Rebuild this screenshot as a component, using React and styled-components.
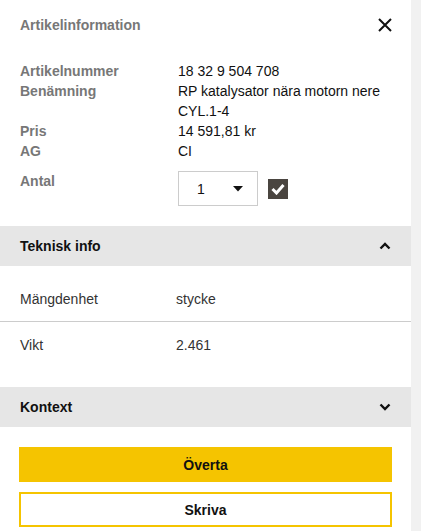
import styled, { createGlobalStyle } from 'styled-components';

const GlobalStyle = createGlobalStyle`
  body {
    margin: 0;
    background: #f1f1f1;
    font-family: "Liberation Sans", Arial, sans-serif;
    font-size: 14px;
    color: #222;
  }
`;

const Page = styled.div`
  display: flex;
  height: 531px;
  overflow: hidden;
`;

const Panel = styled.div`
  width: 411px;
  background: #fff;
  display: flex;
  flex-direction: column;
`;

const Header = styled.div`
  display: flex;
  align-items: center;
  justify-content: space-between;
  padding: 16px 18px 0 20px;
  height: 18px;

  h1 {
    margin: 0;
    font-size: 14px;
    font-weight: 700;
    color: #777;
  }
`;

const CloseBtn = styled.button`
  border: 0;
  background: none;
  padding: 0;
  display: flex;
  cursor: pointer;
`;

const InfoGrid = styled.dl`
  display: grid;
  grid-template-columns: 158px 1fr;
  margin: 27px 0 0 20px;
  line-height: 20px;

  dt {
    font-weight: 700;
    color: #777;
  }

  dd {
    margin: 0;
    color: #111;
    padding-right: 20px;
  }
`;

const QtyRow = styled.div`
  display: grid;
  grid-template-columns: 158px auto auto 1fr;
  align-items: start;
  margin: 10px 0 0 20px;

  label {
    font-weight: 700;
    color: #777;
    line-height: 20px;
  }
`;

const Select = styled.div`
  width: 80px;
  height: 35px;
  box-sizing: border-box;
  border: 1px solid #ccc;
  display: flex;
  align-items: center;
  justify-content: space-between;
  padding: 0 14px 0 18px;
  color: #111;
`;

const Check = styled.span`
  width: 20px;
  height: 20px;
  margin: 8px 0 0 10px;
  background: #4a4540;
  display: flex;
  align-items: center;
  justify-content: center;
`;

const SectionBar = styled.div`
  height: 40px;
  flex-shrink: 0;
  background: #e6e6e6;
  display: flex;
  align-items: center;
  justify-content: space-between;
  padding: 0 20px;
  margin-top: ${(p) => p.$top}px;
  font-weight: 700;
  color: #111;
`;

const DataRow = styled.div`
  display: grid;
  grid-template-columns: 156px 1fr;
  line-height: 20px;
  padding: ${(p) => p.$pad};
  padding-left: 20px;
  color: #333;
  border-bottom: ${(p) => (p.$line ? '1px solid #ccc' : '0')};
`;

const Actions = styled.div`
  display: flex;
  flex-direction: column;
  gap: 10px;
  padding: 20px 19px 0 19px;
`;

const Button = styled.button`
  height: 35px;
  flex-shrink: 0;
  font-family: inherit;
  font-size: 14px;
  font-weight: 700;
  color: #111;
  background: ${(p) => (p.$primary ? '#f5c400' : '#fff')};
  border: ${(p) => (p.$primary ? '0' : '2px solid #f5c400')};
`;

const Chevron = ({ up }) => (
  <svg width="12" height="8" viewBox="0 0 12 8">
    <path
      d={up ? 'M1.5 6.5 L6 2 L10.5 6.5' : 'M1.5 1.5 L6 6 L10.5 1.5'}
      fill="none"
      stroke="#111"
      strokeWidth="2.4"
    />
  </svg>
);

export default function App() {
  return (
    <>
      <GlobalStyle />
      <Page>
        <Panel>
          <Header>
            <h1>Artikelinformation</h1>
            <CloseBtn>
              <svg width="16" height="16" viewBox="0 0 16 16">
                <path d="M2 2 L14 14 M14 2 L2 14" stroke="#111" strokeWidth="2" />
              </svg>
            </CloseBtn>
          </Header>

          <InfoGrid>
            <dt>Artikelnummer</dt>
            <dd>18 32 9 504 708</dd>
            <dt>Benämning</dt>
            <dd>RP katalysator nära motorn nere CYL.1-4</dd>
            <dt>Pris</dt>
            <dd>14 591,81 kr</dd>
            <dt>AG</dt>
            <dd>CI</dd>
          </InfoGrid>

          <QtyRow>
            <label>Antal</label>
            <Select>
              <span>1</span>
              <svg width="10" height="6" viewBox="0 0 10 6">
                <path d="M0 0 H10 L5 5.5 Z" fill="#111" />
              </svg>
            </Select>
            <Check>
              <svg width="14" height="12" viewBox="0 0 14 12">
                <path d="M1.5 6 L5.5 10 L12.5 2" fill="none" stroke="#fff" strokeWidth="3" />
              </svg>
            </Check>
          </QtyRow>

          <SectionBar $top={20}>
            <span>Teknisk info</span>
            <Chevron up />
          </SectionBar>
          <DataRow $pad="23px 0 12px" $line>
            <span>Mängdenhet</span>
            <span>stycke</span>
          </DataRow>
          <DataRow $pad="13px 0 32px">
            <span>Vikt</span>
            <span>2.461</span>
          </DataRow>

          <SectionBar $top={0}>
            <span>Kontext</span>
            <Chevron />
          </SectionBar>

          <Actions>
            <Button $primary>Överta</Button>
            <Button>Skriva</Button>
          </Actions>
        </Panel>
      </Page>
    </>
  );
}
